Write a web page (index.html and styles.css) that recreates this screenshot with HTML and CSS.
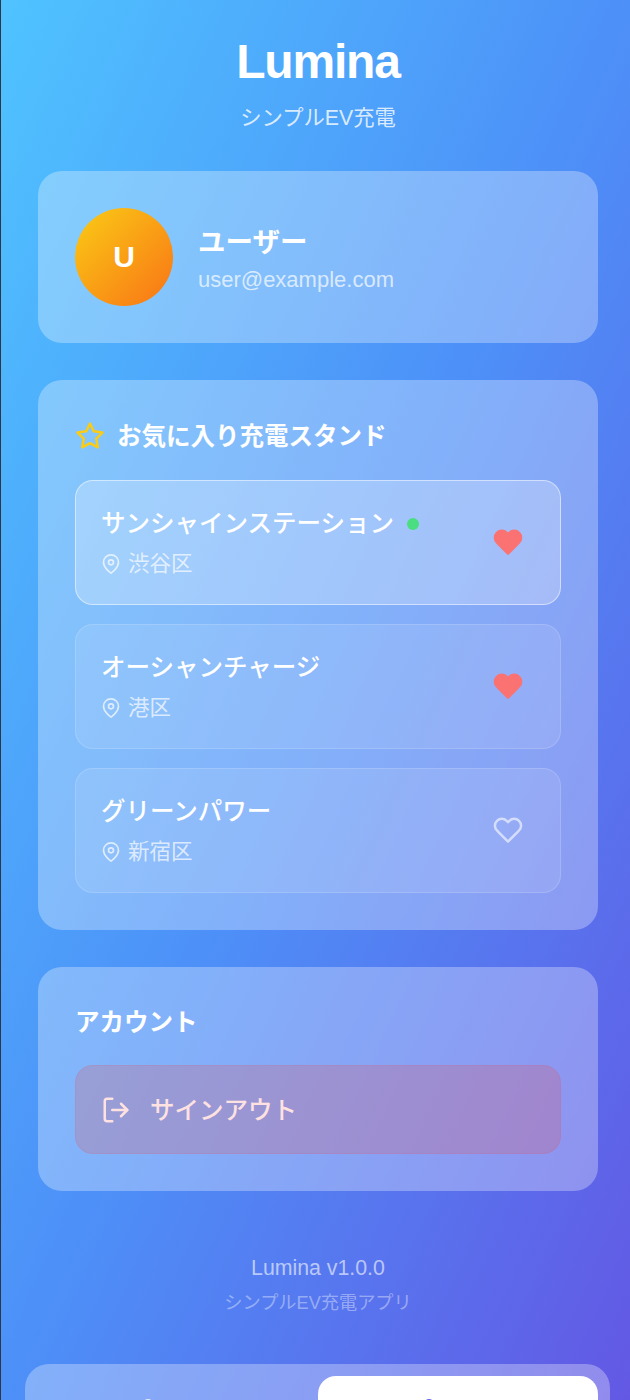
FILE: index.html
```html
<!DOCTYPE html>
<html lang="ja">
<head>
  <meta charset="UTF-8">
  <title>Lumina</title>
  <link rel="stylesheet" href="styles.css">
</head>
<body>
  <div class="app">
    <header class="header">
      <h1>Lumina</h1>
      <p>シンプルEV充電</p>
    </header>

    <main class="content">
      <section class="card profile">
        <div class="avatar">U</div>
        <div class="profile-info">
          <h2>ユーザー</h2>
          <p>user@example.com</p>
        </div>
      </section>

      <section class="card">
        <h3 class="card-title">
          <svg class="star" viewBox="0 0 24 24" width="30" height="30" fill="none" stroke="#facc15" stroke-width="2" stroke-linecap="round" stroke-linejoin="round"><polygon points="12 2 15.09 8.26 22 9.27 17 14.14 18.18 21.02 12 17.77 5.82 21.02 7 14.14 2 9.27 8.91 8.26"/></svg>
          お気に入り充電スタンド
        </h3>
        <div class="station-list">
          <div class="station active">
            <div class="station-info">
              <div class="station-name">サンシャインステーション <span class="dot"></span></div>
              <div class="station-area">
                <svg viewBox="0 0 24 24" width="20" height="20" fill="none" stroke="currentColor" stroke-width="2"><path d="M21 10c0 7-9 13-9 13s-9-6-9-13a9 9 0 0 1 18 0z"/><circle cx="12" cy="10" r="3"/></svg>
                渋谷区
              </div>
            </div>
            <svg class="heart" viewBox="0 0 24 24" width="30" height="30" fill="#fb7272" stroke="#fb7272" stroke-width="2" stroke-linejoin="round"><path d="M20.84 4.61a5.5 5.5 0 0 0-7.78 0L12 5.67l-1.06-1.06a5.5 5.5 0 0 0-7.78 7.78l1.06 1.06L12 21.23l7.78-7.78 1.06-1.06a5.5 5.5 0 0 0 0-7.78z"/></svg>
          </div>
          <div class="station">
            <div class="station-info">
              <div class="station-name">オーシャンチャージ</div>
              <div class="station-area">
                <svg viewBox="0 0 24 24" width="20" height="20" fill="none" stroke="currentColor" stroke-width="2"><path d="M21 10c0 7-9 13-9 13s-9-6-9-13a9 9 0 0 1 18 0z"/><circle cx="12" cy="10" r="3"/></svg>
                港区
              </div>
            </div>
            <svg class="heart" viewBox="0 0 24 24" width="30" height="30" fill="#fb7272" stroke="#fb7272" stroke-width="2" stroke-linejoin="round"><path d="M20.84 4.61a5.5 5.5 0 0 0-7.78 0L12 5.67l-1.06-1.06a5.5 5.5 0 0 0-7.78 7.78l1.06 1.06L12 21.23l7.78-7.78 1.06-1.06a5.5 5.5 0 0 0 0-7.78z"/></svg>
          </div>
          <div class="station">
            <div class="station-info">
              <div class="station-name">グリーンパワー</div>
              <div class="station-area">
                <svg viewBox="0 0 24 24" width="20" height="20" fill="none" stroke="currentColor" stroke-width="2"><path d="M21 10c0 7-9 13-9 13s-9-6-9-13a9 9 0 0 1 18 0z"/><circle cx="12" cy="10" r="3"/></svg>
                新宿区
              </div>
            </div>
            <svg class="heart empty" viewBox="0 0 24 24" width="30" height="30" fill="none" stroke="currentColor" stroke-width="2" stroke-linejoin="round"><path d="M20.84 4.61a5.5 5.5 0 0 0-7.78 0L12 5.67l-1.06-1.06a5.5 5.5 0 0 0-7.78 7.78l1.06 1.06L12 21.23l7.78-7.78 1.06-1.06a5.5 5.5 0 0 0 0-7.78z"/></svg>
          </div>
        </div>
      </section>

      <section class="card">
        <h3 class="card-title plain">アカウント</h3>
        <button class="signout">
          <svg viewBox="0 0 24 24" width="30" height="30" fill="none" stroke="currentColor" stroke-width="2" stroke-linecap="round" stroke-linejoin="round"><path d="M9 21H5a2 2 0 0 1-2-2V5a2 2 0 0 1 2-2h4"/><path d="M16 17l5-5-5-5"/><path d="M21 12H9"/></svg>
          <span class="signout-label">サインアウト</span>
        </button>
      </section>
    </main>

    <footer class="footer">
      <p class="version">Lumina v1.0.0</p>
      <p class="tagline">シンプルEV充電アプリ</p>
    </footer>

    <nav class="tabbar">
      <div class="tab">
        <svg viewBox="0 0 24 24" width="32" height="32" fill="none" stroke="currentColor" stroke-width="2"><circle cx="12" cy="4" r="3"/></svg>
      </div>
      <div class="tab selected">
        <svg viewBox="0 0 24 24" width="32" height="32" fill="none" stroke="currentColor" stroke-width="2"><circle cx="12" cy="4" r="3"/></svg>
      </div>
    </nav>
  </div>
</body>
</html>
```

FILE: styles.css
```css
html, body {
  margin: 0;
  padding: 0;
}
body {
  font-family: "Liberation Sans", "Noto Sans CJK JP", sans-serif;
  color: #fff;
  background: #2d3748;
  height: 1400px;
  overflow: hidden;
}
.app {
  margin-left: 1px;
  height: 1400px;
  padding: 0 32px 0 37px;
  box-sizing: border-box;
  background: linear-gradient(to bottom right, #4fc3ff 0%, #4d90f8 50%, #6358e4 100%);
  overflow: hidden;
}
.header {
  text-align: center;
  padding-top: 36px;
  margin-bottom: 38px;
}
.header h1 {
  margin: 0;
  font-size: 48px;
  line-height: 52px;
  font-weight: 700;
  letter-spacing: -0.025em;
}
.header p {
  margin: 15px 0 0;
  font-size: 21.3px;
  line-height: 30px;
  color: rgba(255, 255, 255, 0.8);
}
.content {
  display: flex;
  flex-direction: column;
  gap: 37px;
}
.card {
  padding: 37px;
  border-radius: 24px;
  background: rgba(255, 255, 255, 0.3);
}
.profile {
  display: flex;
  align-items: center;
  gap: 25px;
}
.avatar {
  width: 98px;
  height: 98px;
  border-radius: 50%;
  display: flex;
  align-items: center;
  justify-content: center;
  font-size: 30px;
  font-weight: 700;
  background: linear-gradient(135deg, #facc15, #f97316);
}
.profile-info {
  padding-top: 6px;
}
.profile-info h2 {
  margin: 0;
  font-size: 27.5px;
  line-height: 34px;
  font-weight: 700;
}
.profile-info p {
  margin: 6px 0 0;
  font-size: 22px;
  line-height: 28px;
  color: rgba(255, 255, 255, 0.7);
}
.card-title {
  display: flex;
  align-items: center;
  gap: 12px;
  margin: 0 0 25px;
  padding-top: 2px;
  font-size: 24.5px;
  line-height: 36px;
  font-weight: 700;
}
.card-title.plain {
  margin-bottom: 24px;
  padding-top: 1px;
}
.star {
  margin-bottom: 2px;
}
.station-list {
  display: flex;
  flex-direction: column;
  gap: 19px;
}
.station {
  display: flex;
  align-items: center;
  justify-content: space-between;
  height: 125px;
  box-sizing: border-box;
  padding: 0 25px;
  border: 1px solid rgba(255, 255, 255, 0.15);
  border-radius: 18px;
  background: rgba(255, 255, 255, 0.1);
}
.station.active {
  background: rgba(255, 255, 255, 0.25);
  border-color: rgba(255, 255, 255, 0.5);
}
.station-info {
  padding-top: 1px;
}
.station-name {
  display: flex;
  align-items: center;
  gap: 13px;
  font-size: 24.5px;
  line-height: 34px;
  font-weight: 500;
}
.dot {
  width: 12px;
  height: 12px;
  border-radius: 50%;
  background: #4ade80;
}
.station-area {
  display: flex;
  align-items: center;
  gap: 7px;
  margin-top: 8px;
  font-size: 21.5px;
  line-height: 31px;
  color: rgba(255, 255, 255, 0.7);
}
.heart {
  flex-shrink: 0;
  margin-right: 12px;
  margin-bottom: 2px;
}
.heart.empty {
  color: rgba(255, 255, 255, 0.6);
}
.signout {
  display: flex;
  align-items: center;
  gap: 19px;
  width: 100%;
  height: 89px;
  padding: 0 25px;
  border: 1px solid rgba(239, 68, 68, 0.1);
  border-radius: 18px;
  background: rgba(239, 68, 68, 0.2);
  color: #fee2e2;
  font: 500 24.5px "Liberation Sans", "Noto Sans CJK JP", sans-serif;
  text-align: left;
}
.signout-label {
  padding-bottom: 2px;
}
.footer {
  margin-top: 63px;
  text-align: center;
}
.footer p {
  margin: 0;
}
.version {
  font-size: 21.3px;
  line-height: 28px;
  color: rgba(255, 255, 255, 0.6);
}
.footer .tagline {
  margin-top: 7px;
  font-size: 18.2px;
  line-height: 28px;
  color: rgba(255, 255, 255, 0.4);
}
.tabbar {
  display: flex;
  margin: 47px -12px 0 -13px;
  padding: 12px;
  height: 100px;
  border-radius: 24px;
  background: rgba(255, 255, 255, 0.3);
}
.tab {
  flex: 1;
  display: flex;
  justify-content: center;
  padding-top: 23px;
  border-radius: 18px;
  color: rgba(255, 255, 255, 0.8);
}
.tab svg {
  margin-right: 58px;
}
.tab.selected {
  background: #fff;
  color: #6366f1;
}
```
